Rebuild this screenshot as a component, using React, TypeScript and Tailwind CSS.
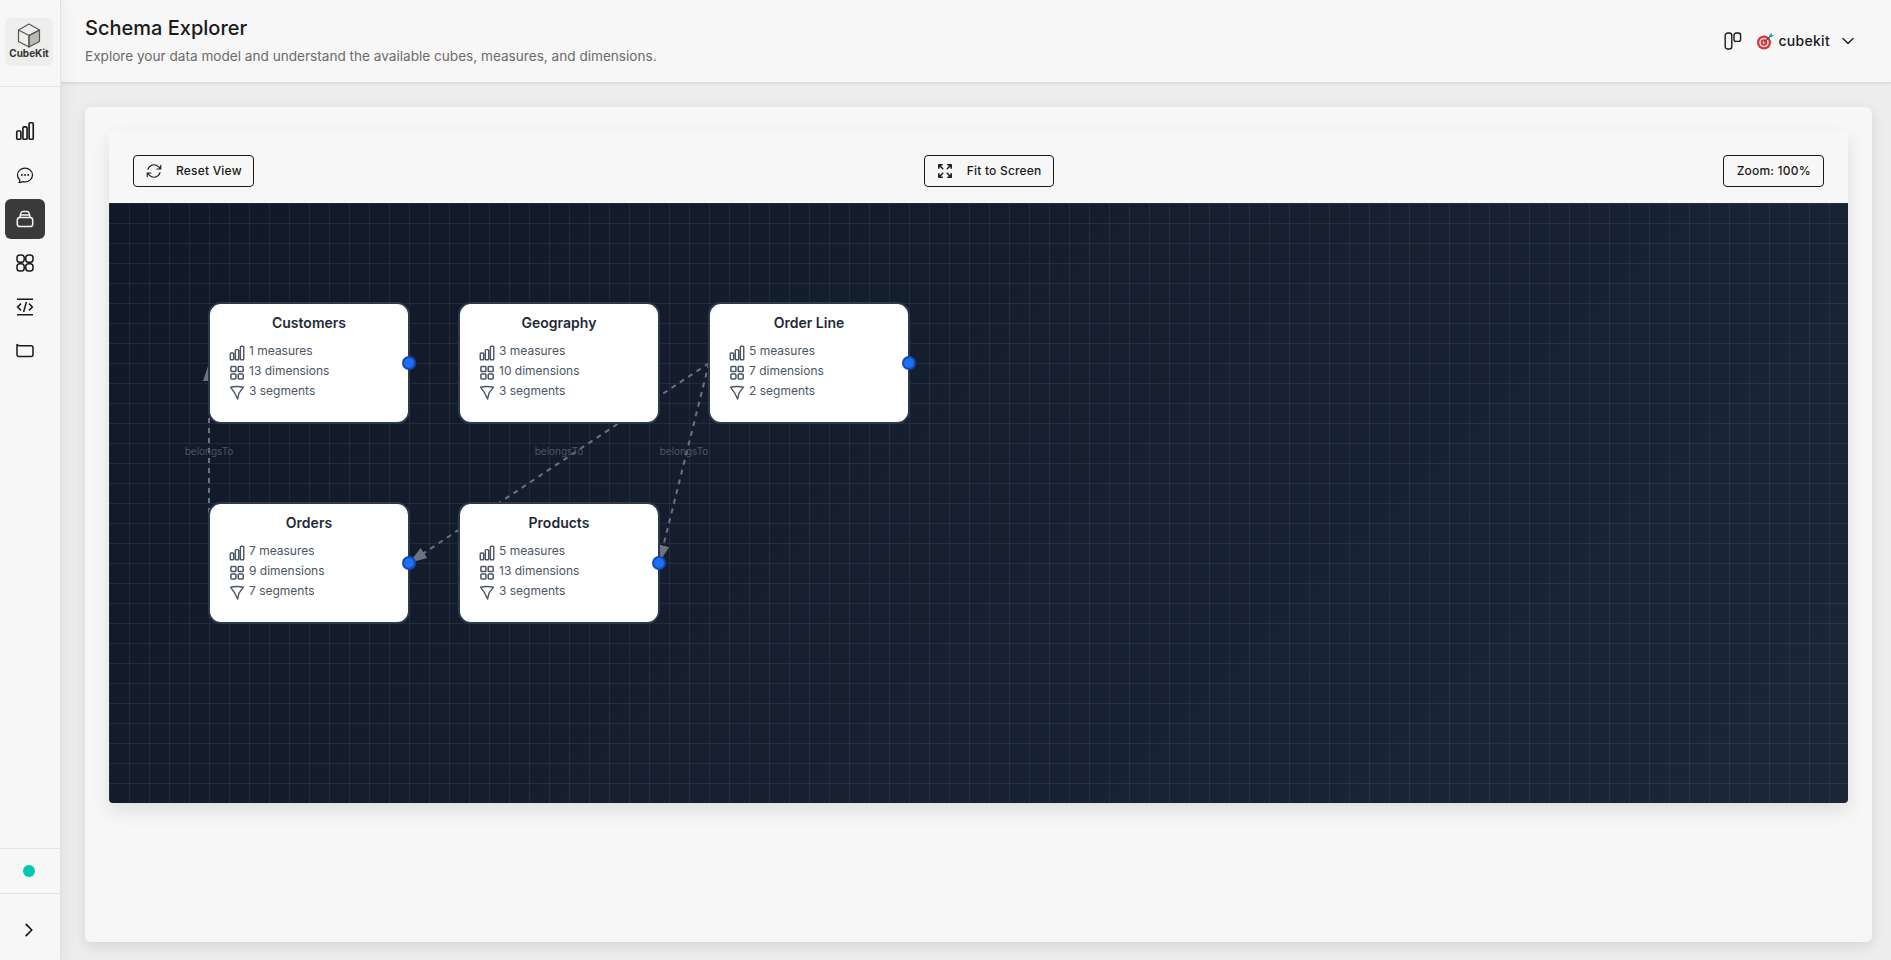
import {
  HiOutlineArrowPath,
  HiOutlineArrowsPointingOut,
  HiOutlineChartBar,
  HiOutlineChatBubbleOvalLeftEllipsis,
  HiOutlineChevronDown,
  HiOutlineChevronRight,
} from "react-icons/hi2"

const cubes = [
  { name: "Customers", x: 99, y: 99, measures: 1, dimensions: 13, segments: 3, handle: true },
  { name: "Geography", x: 349, y: 99, measures: 3, dimensions: 10, segments: 3, handle: false },
  { name: "Order Line", x: 599, y: 99, measures: 5, dimensions: 7, segments: 2, handle: true },
  { name: "Orders", x: 99, y: 299, measures: 7, dimensions: 9, segments: 7, handle: true },
  { name: "Products", x: 349, y: 299, measures: 5, dimensions: 13, segments: 3, handle: true },
]

const edges = [
  { x1: 100, y1: 360, x2: 100, y2: 160 },
  { x1: 600, y1: 160, x2: 300, y2: 360 },
  { x1: 600, y1: 160, x2: 550, y2: 360 },
]

function DimensionIcon() {
  return (
    <svg width="18" height="18" viewBox="0 0 18 18" fill="none" stroke="currentColor" strokeWidth="1.5" className="shrink-0">
      <rect x="2.9" y="2.6" width="5" height="5" rx="0.8" />
      <rect x="10.2" y="2.6" width="5" height="5" rx="0.8" />
      <rect x="2.9" y="9.9" width="5" height="5" rx="0.8" />
      <rect x="10.2" y="9.9" width="5" height="5" rx="0.8" />
    </svg>
  )
}

function SegmentIcon() {
  return (
    <svg width="18" height="18" viewBox="0 0 18 18" fill="none" stroke="currentColor" strokeWidth="1.4" strokeLinejoin="round" className="shrink-0">
      <path d="M2.5 3.2 C6 2.5 12 2.5 15.5 3.2 L11 9.2 L9.6 15 L6.8 9.2 Z" />
    </svg>
  )
}

function CubeNode({ cube }: { cube: (typeof cubes)[number] }) {
  const rows = [
    { icon: <HiOutlineChartBar size={18} strokeWidth={1.9} className="shrink-0" />, label: `${cube.measures} measures` },
    { icon: <DimensionIcon />, label: `${cube.dimensions} dimensions` },
    { icon: <SegmentIcon />, label: `${cube.segments} segments` },
  ]
  return (
    <div
      className="absolute w-[202px] h-[122px] rounded-[13px] border-2 border-[#2c3a4d] bg-white px-[18px] pt-[9px]"
      style={{ left: cube.x, top: cube.y }}
    >
      <div className="text-sm leading-5 font-semibold text-[#1f2937] text-center">{cube.name}</div>
      <div className="mt-2 text-[#4b5563]">
        {rows.map((row) => (
          <div key={row.label} className="flex items-start gap-[3px] h-5 text-xs leading-5">
            <span className="mt-[3px] flex">{row.icon}</span>
            <span>{row.label}</span>
          </div>
        ))}
      </div>
      {cube.handle && (
        <div className="absolute right-[-8px] top-[52px] w-[14px] h-[14px] rounded-full bg-[#1d6ff2] border-2 border-[#1447b8]"></div>
      )}
    </div>
  )
}

function Edges() {
  return (
    <svg className="absolute inset-0 w-full h-full" fill="none">
      <defs>
        <marker id="arrow" viewBox="0 0 18 12" refX="18" refY="6" markerWidth="18" markerHeight="12" markerUnits="userSpaceOnUse" orient="auto">
          <path d="M0 0 L18 6 L0 12 Z" fill="#6b7280" />
        </marker>
      </defs>
      {edges.map((edge, i) => (
        <g key={i}>
          <line
            x1={edge.x1}
            y1={edge.y1}
            x2={edge.x2}
            y2={edge.y2}
            stroke="#6b7280"
            strokeWidth="2"
            strokeDasharray="5 5"
            markerEnd="url(#arrow)"
          />
          <text x={(edge.x1 + edge.x2) / 2} y={252} textAnchor="middle" fontSize="10" fill="#4b5563">
            belongsTo
          </text>
        </g>
      ))}
    </svg>
  )
}

function NavButton({ children, active }: { children: React.ReactNode; active?: boolean }) {
  return (
    <div
      className={`flex items-center justify-center w-10 h-10 rounded-md ${
        active ? "bg-[#3a3a3a] text-[#f5f5f5]" : "text-[#1a1a1a]"
      }`}
    >
      {children}
    </div>
  )
}

function Sidebar() {
  return (
    <aside className="w-[61px] h-full shrink-0 flex flex-col bg-[#f7f7f7] border-r border-[#e2e2e2] shadow-[4px_0_14px_rgba(0,0,0,0.05)] z-20">
      <div className="h-[87px] shrink-0 border-b border-[#e2e2e2] pl-[5px] pt-[18px]">
        <div className="w-12 h-12 rounded-md bg-[#eeeeec] flex flex-col items-center pt-[5px]">
          <svg width="24" height="25" viewBox="0 0 24 25" strokeLinejoin="round" strokeWidth="1.2" stroke="#555555" fill="none">
            <path d="M12 12.5 L22.5 7 V18.5 L12 24 Z" fill="#b9b9b7" />
            <path d="M12 1 L22.5 7 L12 12.5 L1.5 7 Z M1.5 7 V18.5 L12 24 V12.5" />
          </svg>
          <div className="text-[10px] leading-3 font-bold text-[#333333] mt-[-1px]">CubeKit</div>
        </div>
      </div>
      <nav className="flex flex-col gap-1 pl-[5px] pt-6 flex-1">
        <NavButton>
          <HiOutlineChartBar size={22} strokeWidth={1.8} />
        </NavButton>
        <NavButton>
          <HiOutlineChatBubbleOvalLeftEllipsis size={20} />
        </NavButton>
        <NavButton active>
          <svg width="18" height="18" viewBox="0 0 18 18" fill="none" stroke="currentColor" strokeWidth="1.5">
            <rect x="1.3" y="7.6" width="15.4" height="9" rx="2.6" />
            <path d="M3.8 7.6 L4.8 3.4 C5 2.2 5.8 1.4 7 1.4 H11 C12.2 1.4 13 2.2 13.2 3.4 L14.2 7.6 M4.6 5 H13.4" />
          </svg>
        </NavButton>
        <NavButton>
          <svg width="18" height="18" viewBox="0 0 18 18" fill="none" stroke="currentColor" strokeWidth="1.5">
            <rect x="1" y="1" width="7.2" height="7.2" rx="2.8" />
            <rect x="9.8" y="1" width="7.2" height="7.2" rx="2.8" />
            <rect x="1" y="9.8" width="7.2" height="7.2" rx="2.8" />
            <rect x="9.8" y="9.8" width="7.2" height="7.2" rx="2.8" />
          </svg>
        </NavButton>
        <NavButton>
          <svg width="18" height="18" viewBox="0 0 18 18" fill="none" stroke="currentColor" strokeWidth="1.5">
            <path d="M1 1.2 H17 M1 16.8 H17 M5 5.6 L1.6 9 L5 12.4 M13 5.6 L16.4 9 L13 12.4 M10.4 4 L7.6 14" />
          </svg>
        </NavButton>
        <NavButton>
          <svg width="18" height="18" viewBox="0 0 18 18" fill="none" stroke="currentColor" strokeWidth="1.5" strokeLinejoin="round">
            <path d="M1 2.6 C1.8 3.4 2.6 3.8 3.6 3.8 H15 C16.2 3.8 17 4.6 17 5.8 V12.6 C17 13.8 16.2 14.6 15 14.6 H3 C1.8 14.6 1 13.8 1 12.6 Z" />
          </svg>
        </NavButton>
      </nav>
      <div className="h-[45px] shrink-0 border-t border-[#e2e2e2] flex items-center pl-[23px]">
        <div className="w-3 h-3 rounded-full bg-[#00c9b1]"></div>
      </div>
      <div className="h-[67px] shrink-0 border-t border-[#e2e2e2] flex items-center justify-center">
        <HiOutlineChevronRight size={18} strokeWidth={2.2} className="text-[#111111] translate-x-[-1px] translate-y-[3px]" />
      </div>
    </aside>
  )
}

function Header() {
  return (
    <header className="h-[83px] shrink-0 flex items-start justify-between pl-6 pr-[35px] pt-[14px] bg-[#f7f7f7] border-b border-[#dcdcdc] shadow-[0_1px_3px_rgba(0,0,0,0.08)] z-10">
      <div>
        <h1 className="text-xl leading-7 font-medium text-[#1a1a1a]">Schema Explorer</h1>
        <p className="text-[13.6px] leading-5 mt-1 text-[#6b6b6b]">
          Explore your data model and understand the available cubes, measures, and dimensions.
        </p>
      </div>
      <div className="flex items-center mt-[17px] text-[#1a1a1a]">
        <svg width="18" height="18" viewBox="0 0 18 18" fill="none" stroke="currentColor" strokeWidth="1.4" className="mr-[14px]">
          <rect x="1.2" y="1" width="6.6" height="16" rx="2.6" />
          <rect x="10" y="1" width="6.6" height="8.4" rx="2.2" />
        </svg>
        <svg width="19" height="18" viewBox="0 0 19 18" className="mr-[3px]">
          <circle cx="8" cy="10.5" r="7" fill="#d8343c" />
          <circle cx="8" cy="10.5" r="4.8" fill="#f6d2cf" />
          <circle cx="8" cy="10.5" r="3.2" fill="#d8343c" />
          <circle cx="8" cy="10.5" r="1.4" fill="#f6d2cf" />
          <path d="M8 10.5 L15 3.5" stroke="#3f5560" strokeWidth="1.1" />
          <path d="M13 3.6 L15.2 0.8 L15.8 2.8 L18 3.2 L15.2 5.6 Z" fill="#1fa7b5" />
        </svg>
        <span className="text-sm font-medium tracking-[0.3px]">cubekit</span>
        <HiOutlineChevronDown size={16} strokeWidth={2} className="ml-[10px]" />
      </div>
    </header>
  )
}

function ToolButton({ children }: { children: React.ReactNode }) {
  return (
    <button className="flex items-center gap-[13px] h-8 px-[11px] rounded border border-[#1a1a1a] text-xs font-medium tracking-[0.2px] text-[#1a1a1a]">
      {children}
    </button>
  )
}

export default function App() {
  return (
    <div className="w-screen h-screen flex overflow-hidden bg-[#ededed] font-['Inter',sans-serif]">
      <Sidebar />
      <div className="flex-1 min-w-0 flex flex-col">
        <Header />
        <main className="flex-1 min-h-0 pl-6 pr-[19px] pt-6 pb-[18px]">
          <div className="h-full rounded-md bg-[#f7f7f7] p-6 shadow-[0_4px_14px_rgba(0,0,0,0.1)]">
            <div className="rounded-b shadow-[0_8px_20px_rgba(0,0,0,0.1)]">
              <div className="flex items-center justify-between px-6 pt-6 pb-4 bg-[#f7f7f7]">
                <ToolButton>
                  <HiOutlineArrowPath size={18} />
                  Reset View
                </ToolButton>
                <ToolButton>
                  <HiOutlineArrowsPointingOut size={18} strokeWidth={2} />
                  Fit to Screen
                </ToolButton>
                <button className="h-8 w-[100.5px] rounded border border-[#1a1a1a] text-xs font-medium tracking-[0.2px] text-[#1a1a1a]">
                  Zoom: 100%
                </button>
              </div>
              <div className="relative h-[600px] overflow-hidden rounded-b bg-[linear-gradient(rgba(148,163,184,0.11)_1px,transparent_1px),linear-gradient(90deg,rgba(148,163,184,0.11)_1px,transparent_1px),linear-gradient(135deg,#111827,#1b2737)] bg-[size:20px_20px,20px_20px,100%_100%]">
                <Edges />
                {cubes.map((cube) => (
                  <CubeNode key={cube.name} cube={cube} />
                ))}
              </div>
            </div>
          </div>
        </main>
      </div>
    </div>
  )
}
